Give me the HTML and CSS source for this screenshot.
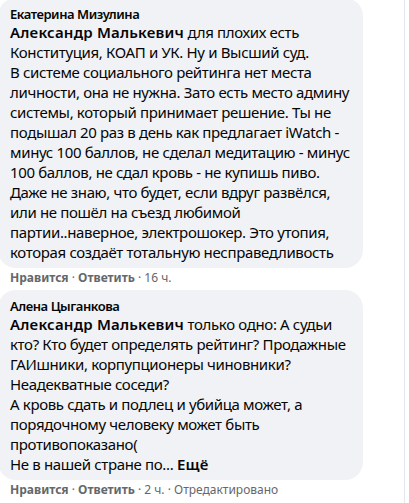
FILE: index.html
```html
<!DOCTYPE html>
<html lang="ru">
<head>
<meta charset="utf-8">
<title>Комментарии</title>
<link rel="stylesheet" href="styles.css">
</head>
<body>
<div class="page">
  <div class="list">
    <div class="comment">
      <div class="bubble">
        <div class="author">Екатерина Мизулина</div>
        <div class="text"><span class="mention">Александр Малькевич</span> для плохих есть<br>Конституция, КОАП и УК. Ну и Высший суд.<br>В системе социального рейтинга нет места<br>личности, она не нужна. Зато есть место админу<br>системы, который принимает решение. Ты не<br>подышал 20 раз в день как предлагает iWatch -<br>минус 100 баллов, не сделал медитацию - минус<br>100 баллов, не сдал кровь - не купишь пиво.<br>Даже не знаю, что будет, если вдруг развёлся,<br>или не пошёл на съезд любимой<br>партии..наверное, электрошокер. Это утопия,<br>которая создаёт тотальную несправедливость</div>
      </div>
      <div class="actions"><b>Нравится</b> · <b>Ответить</b> · 16 ч.</div>
    </div>
    <div class="comment">
      <div class="bubble">
        <div class="author">Алена Цыганкова</div>
        <div class="text"><span class="mention">Александр Малькевич</span> только одно: А судьи<br>кто? Кто будет определять рейтинг? Продажные<br>ГАИшники, корпупционеры чиновники?<br>Неадекватные соседи?<br>А кровь сдать и подлец и убийца может, а<br>порядочному человеку может быть<br>противопоказано(<br>Не в нашей стране по... <span class="more">Ещё</span></div>
      </div>
      <div class="actions"><b>Нравится</b> · <b>Ответить</b> · 2 ч. · Отредактировано</div>
    </div>
  </div>
</div>
</body>
</html>
```

FILE: styles.css
```css
* { box-sizing: border-box; }
html, body { margin: 0; padding: 0; background: #ffffff; }
body {
  font-family: "Noto Sans", "Open Sans", sans-serif;
  color: #050505;
}
.page {
  width: 405px;
  height: 503px;
  border-right: 1px solid #e4e6eb;
  overflow: hidden;
}
.list {
  margin: -2px 0 0 -2px;
}
.comment + .comment {
  margin-top: 4px;
}
.bubble {
  width: 365px;
  background: #f0f2f5;
  border-radius: 18px;
  padding: 8px 12px 6px;
}
.author {
  font-size: 13px;
  line-height: 16px;
  font-weight: 600;
  letter-spacing: -0.45px;
}
.text {
  font-size: 15px;
  line-height: 20px;
  white-space: nowrap;
  letter-spacing: -0.35px;
}
.mention, .more {
  font-weight: 600;
  letter-spacing: 0.2px;
}
.actions {
  font-size: 12px;
  line-height: 16px;
  color: #65676b;
  padding: 2px 0 0 12px;
}
.actions b {
  font-weight: 700;
}
```
